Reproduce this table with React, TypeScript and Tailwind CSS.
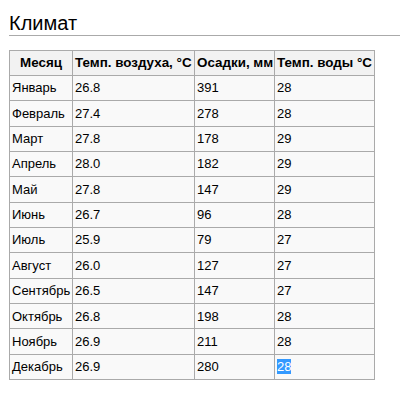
import React from "react";

const rows: [string, string, string, string][] = [
  ["Январь", "26.8", "391", "28"],
  ["Февраль", "27.4", "278", "28"],
  ["Март", "27.8", "178", "29"],
  ["Апрель", "28.0", "182", "29"],
  ["Май", "27.8", "147", "29"],
  ["Июнь", "26.7", "96", "28"],
  ["Июль", "25.9", "79", "27"],
  ["Август", "26.0", "127", "27"],
  ["Сентябрь", "26.5", "147", "27"],
  ["Октябрь", "26.8", "198", "28"],
  ["Ноябрь", "26.9", "211", "28"],
  ["Декабрь", "26.9", "280", "28"],
];

export default function App() {
  return (
    <div
      className="w-[400px] h-[400px] bg-white text-black overflow-hidden"
      style={{ fontFamily: '"Liberation Sans", Arial, sans-serif' }}
    >
      <div className="pl-[9px] pt-[11px]">
        <h2 className="text-[20px] leading-[24px] font-normal border-b border-[#aaaaaa] h-[25px]">
          Климат
        </h2>
        <table className="mt-[14px] w-[365px] border-collapse border border-[#aaaaaa] bg-[#f9f9f9] text-[13px] table-fixed">
          <colgroup>
            <col className="w-[63px]" />
            <col className="w-[122px]" />
            <col className="w-[80px]" />
            <col className="w-[100px]" />
          </colgroup>
          <thead>
            <tr className="h-[25px] text-[13.4px]">
              <th className="border border-[#aaaaaa] bg-[#f2f2f2] font-bold text-center px-[2px] py-0 whitespace-nowrap overflow-hidden">
                Месяц
              </th>
              <th className="border border-[#aaaaaa] bg-[#f2f2f2] font-bold text-left px-[2px] py-0 whitespace-nowrap overflow-hidden">
                Темп. воздуха, °C
              </th>
              <th className="border border-[#aaaaaa] bg-[#f2f2f2] font-bold text-left px-[2px] py-0 whitespace-nowrap overflow-hidden">
                Осадки, мм
              </th>
              <th className="border border-[#aaaaaa] bg-[#f2f2f2] font-bold text-left px-[2px] py-0 whitespace-nowrap overflow-hidden">
                Темп. воды °C
              </th>
            </tr>
          </thead>
          <tbody>
            {rows.map((r, i) => (
              <tr key={r[0]} className="h-[25.35px]">
                <td className="border border-[#aaaaaa] px-[2px] py-0 whitespace-nowrap overflow-hidden">{r[0]}</td>
                <td className="border border-[#aaaaaa] px-[2px] py-0">{r[1]}</td>
                <td className="border border-[#aaaaaa] px-[2px] py-0">{r[2]}</td>
                <td className="border border-[#aaaaaa] px-[2px] py-0">
                  {i === rows.length - 1 ? (
                    <span className="bg-[#3399ff] text-white">{r[3]}</span>
                  ) : (
                    r[3]
                  )}
                </td>
              </tr>
            ))}
          </tbody>
        </table>
      </div>
    </div>
  );
}
